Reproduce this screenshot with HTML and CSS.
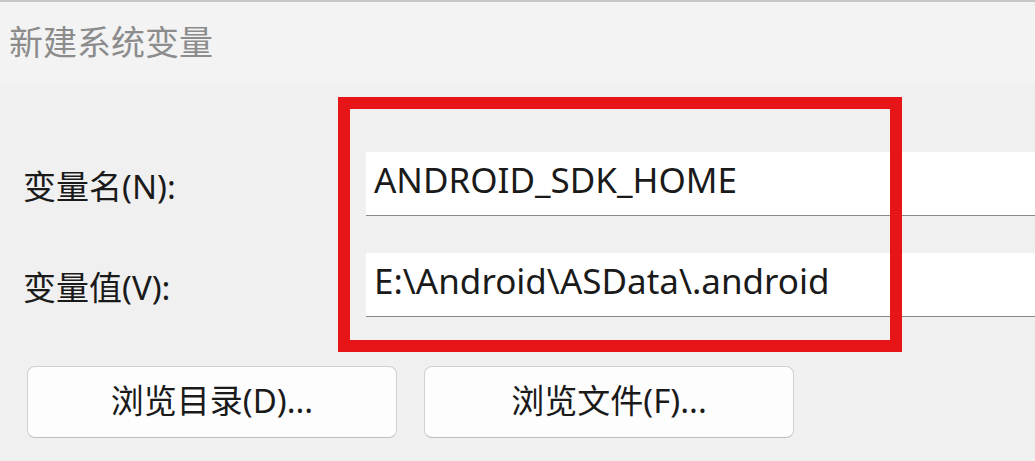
FILE: index.html
```html
<!DOCTYPE html>
<html lang="zh-CN">
<head>
    <meta charset="UTF-8">
    <meta name="viewport" content="width=device-width, initial-scale=1.0">
    <title>新建系统变量</title>
    <link rel="stylesheet" href="styles.css">
</head>
<body>
    <div id="dialog">
        <div class="titlebar">新建系统变量</div>
        <div class="content">
            <div class="fields">
                <label class="field-label" for="var-name">变量名(N):</label>
                <div class="field-input" id="var-name">ANDROID_SDK_HOME</div>
                <label class="field-label" for="var-value">变量值(V):</label>
                <div class="field-input" id="var-value">E:\Android\ASData\.android</div>
            </div>
            <div class="buttons">
                <button class="btn">浏览目录(D)...</button>
                <button class="btn">浏览文件(F)...</button>
            </div>
            <div class="highlight"></div>
        </div>
    </div>
</body>
</html>
```

FILE: styles.css
```css
body {
    margin: 0;
    background-color: #f0f0f0;
    font-family: "Noto Sans", "Noto Sans CJK SC", sans-serif;
    color: #1a1a1a;
    overflow: hidden;
}
#dialog {
    width: 1035px;
    height: 461px;
    position: relative;
}
.titlebar {
    height: 81px;
    border-top: 2px solid #c6c6c6;
    background-color: #f3f3f3;
    color: #8c8c8c;
    font-family: "Noto Sans CJK SC", sans-serif;
    font-size: 34px;
    padding-left: 9px;
    line-height: 78px;
    box-sizing: content-box;
}
.content {
    padding-top: 69px;
}
.fields {
    display: grid;
    grid-template-columns: 343px 1fr;
    row-gap: 37px;
    padding-left: 23px;
}
.field-label {
    display: flex;
    align-items: center;
    font-size: 33px;
    padding-top: 2px;
}
.field-input {
    height: 63px;
    background-color: #fff;
    border-bottom: 1px solid #8a8a8a;
    font-size: 35px;
    line-height: 56px;
    padding-left: 8px;
    white-space: nowrap;
}
.buttons {
    display: flex;
    gap: 27px;
    padding-left: 27px;
    margin-top: 49px;
}
.btn {
    width: 370px;
    height: 72px;
    background-color: #fdfdfd;
    border: 1px solid #d0d0d0;
    border-bottom-color: #bdbdbd;
    border-radius: 8px;
    font-family: "Noto Sans", "Noto Sans CJK SC", sans-serif;
    font-size: 33px;
    color: #1a1a1a;
    padding: 0 0 6px;
}
.highlight {
    position: absolute;
    left: 338px;
    top: 97px;
    width: 540px;
    height: 231px;
    border: 12px solid #e81518;
}
```
